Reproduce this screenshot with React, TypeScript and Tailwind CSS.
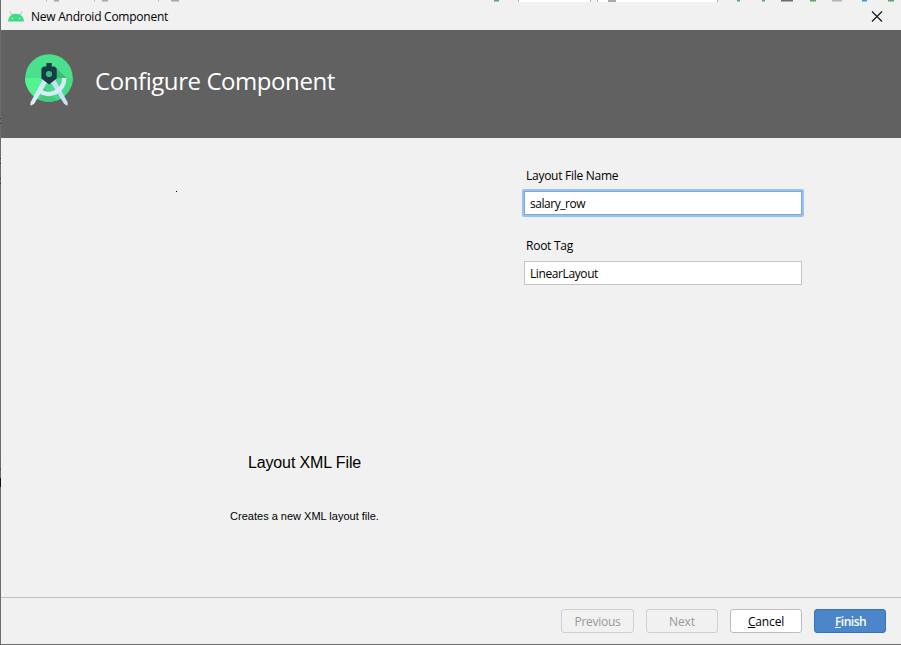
import React from "react";

const UI = "font-['Open_Sans','Noto_Sans',sans-serif]";

function AndroidHead() {
  return (
    <svg width="16" height="12" viewBox="0 0 16 12" fill="none">
      <path d="M2.2 .9 4.3 4.2M13.8 .9 11.7 4.2" stroke="#3ddc84" strokeWidth=".8" strokeLinecap="round" />
      <path d="M0 10.4C.3 5.7 3.5 2.8 8 2.8s7.7 2.9 8 7.6Z" fill="#3ddc84" />
      <circle cx="4.4" cy="7.4" r=".7" fill="#f1f1f1" />
      <circle cx="11.6" cy="7.4" r=".7" fill="#f1f1f1" />
    </svg>
  );
}

function StudioLogo() {
  return (
    <svg width="48" height="54" viewBox="0 0 48 54" fill="none">
      <defs>
        <clipPath id="disc">
          <circle cx="24" cy="24" r="23.8" />
        </clipPath>
        <linearGradient id="leg" x1="0" y1="0" x2="0" y2="1">
          <stop offset="0" stopColor="#cfe5f7" />
          <stop offset="1" stopColor="#e1eefb" />
        </linearGradient>
      </defs>
      <g clipPath="url(#disc)">
        <path d="M0 0h48v48H0Z" fill="#4be08b" />
        <path d="M0 24h48v24H0Z" fill="#46dc86" />
        <path d="M0 24h24L10 48H0Z" fill="#52f492" />
        <path d="M30 13 41.5 24H30Z" fill="#3cba74" />
        <path d="M19 34 34 48H14Z" fill="#3fcb7b" />
      </g>
      <path d="M25.5 28 30.2 25.5 42.6 48.2 42.6 51.8 39.2 50Z" fill="#c6e1f3" />
      <path d="M17.8 25.5 22.5 28 9 50 5.4 51.8 5.6 48.2Z" fill="url(#leg)" />
      <path d="M14 36.4A15.4 15.4 0 0 0 39.2 24" stroke="#d9ebfb" strokeWidth="4.4" />
      <path d="M21.4 9h5.4v3.5h2.8l2.1 2.1v9.8L24.1 30.5l-7.7-6.1v-9.8l2.1-2.1h2.9Z" fill="#173b4a" />
      <circle cx="24" cy="20" r="3.1" fill="#3cba78" />
    </svg>
  );
}

// Slivers of the toolbar that show above the dialog's title bar.
const toolbarBits: { x: number; w: number; c: string }[] = [
  { x: 46, w: 1, c: "#b5b5b5" },
  { x: 54, w: 5, c: "#a0abb5" },
  { x: 94, w: 1, c: "#b5b5b5" },
  { x: 102, w: 6, c: "#a0abb5" },
  { x: 158, w: 1, c: "#b5b5b5" },
  { x: 171, w: 8, c: "#a0abb5" },
  { x: 494, w: 5, c: "#59a869" },
  { x: 737, w: 3, c: "#59a869" },
  { x: 762, w: 3, c: "#59a869" },
  { x: 781, w: 12, c: "#6e6e6e" },
  { x: 810, w: 6, c: "#59a869" },
  { x: 832, w: 10, c: "#b5b5b5" },
  { x: 862, w: 5, c: "#389fd6" },
  { x: 888, w: 6, c: "#59a869" },
];

function ToolbarSliver() {
  return (
    <svg className="absolute -left-px top-0" width="901" height="2">
      <path d="M518.5 0V2M590.5 0V2M597.5 0V2M717.5 0V2" stroke="#b5b5b5" />
      <path d="M519 0h71v2h-71ZM598 0h119v2H598Z" fill="#fff" />
      <path d="M608 0h8v2h-8Z" fill="#a0abb5" />
      {toolbarBits.map((b) => (
        <rect key={b.x} x={b.x} y="0" width={b.w} height="1.5" fill={b.c} />
      ))}
    </svg>
  );
}

// Editor content peeking out along the dialog's left edge.
function EdgeMarks() {
  return (
    <svg className="absolute -left-px top-0" width="1" height="644">
      <path d="M0 118h1v1H0ZM0 123h1v1H0ZM0 158h1v1H0ZM0 163h1v1H0ZM0 178h1v1H0ZM0 183h1v1H0Z" fill="#1b4258" />
      <path d="M0 454h1v7H0Z" fill="#6c6c50" />
      <path d="M0 468h1v3H0Z" fill="#3c5a8c" />
      <path d="M0 478h1v9H0Z" fill="#111" />
    </svg>
  );
}

export default function App() {
  return (
    <div className={`relative flex h-[645px] w-[901px] flex-col border-b border-l border-[#6c6c6c] bg-[#f1f1f1] text-[12px] leading-4 text-black ${UI}`}>
      <div className="flex h-[30px] shrink-0 items-center pl-[7px] pr-[18px] pt-[3px]">
        <AndroidHead />
        <span className="ml-[7px] whitespace-nowrap tracking-[-0.25px]">New Android Component</span>
        <svg className="ml-auto" width="12" height="12" viewBox="0 0 12 12">
          <path d="M1 .5 11 10.5M11 .5 1 10.5" stroke="#111" strokeWidth="1.1" />
        </svg>
      </div>
      <header className="flex h-[108px] shrink-0 items-center bg-[#616161] pl-6">
        <div className="-mt-1.5">
          <StudioLogo />
        </div>
        <h1 className="-mt-1.5 ml-[22px] whitespace-nowrap text-[24px] leading-8 tracking-[-0.43px] text-white">Configure Component</h1>
      </header>
      <main className="flex h-[459px] shrink-0 pl-[116px]">
        <section className="flex w-[374px] flex-col items-center font-['Liberation_Sans',sans-serif]">
          <span className="ml-[59px] mt-[53px] size-px shrink-0 self-start bg-black" />
          <h2 className="mt-[261px] whitespace-nowrap pl-px text-[16px] leading-5 tracking-[-0.12px]">Layout XML File</h2>
          <p className="mt-[35px] whitespace-nowrap pl-px text-[11px] leading-4">Creates a new XML layout file.</p>
        </section>
        <section className="ml-[31px] w-[282px] pt-[30px]">
          <label className="ml-1 block tracking-[-0.27px]">Layout File Name</label>
          <div className="mt-[5px] h-7 rounded-[2px] bg-[#97c3f3] p-[2px]">
            <div className="flex h-6 items-center border border-[#7ba6d8] bg-white pl-[5px] pt-[2px] tracking-[-0.45px]">salary_row</div>
          </div>
          <label className="ml-1 mt-[21px] block tracking-[-0.25px]">Root Tag</label>
          <div className="mx-[2px] mt-[7px] flex h-6 items-center border border-[#c4c4c4] bg-white pl-[5px] pt-[2px] tracking-[-0.4px]">LinearLayout</div>
        </section>
      </main>
      <footer className="flex grow items-start justify-end gap-3 border-t border-[#c0c0c0] pr-[15px] pt-[11px]">
        <button className="h-6 w-[73px] rounded-[3px] border border-[#cfcfcf] pt-[2px] tracking-[-0.25px] text-[#999]">Previous</button>
        <button className="h-6 w-[72px] rounded-[3px] border border-[#cfcfcf] pt-[2px] tracking-[-0.1px] text-[#999]">Next</button>
        <button className="h-6 w-[72px] rounded-[3px] border border-[#bcbcbc] bg-white pt-[2px] tracking-[-0.15px]"><u>C</u>ancel</button>
        <button className="h-6 w-[72px] rounded-[3px] border border-[#3a72b6] bg-[#4a86c9] pt-[2px] pl-px font-semibold tracking-[-0.5px] text-white"><u>F</u>inish</button>
      </footer>
      <ToolbarSliver />
      <EdgeMarks />
    </div>
  );
}
